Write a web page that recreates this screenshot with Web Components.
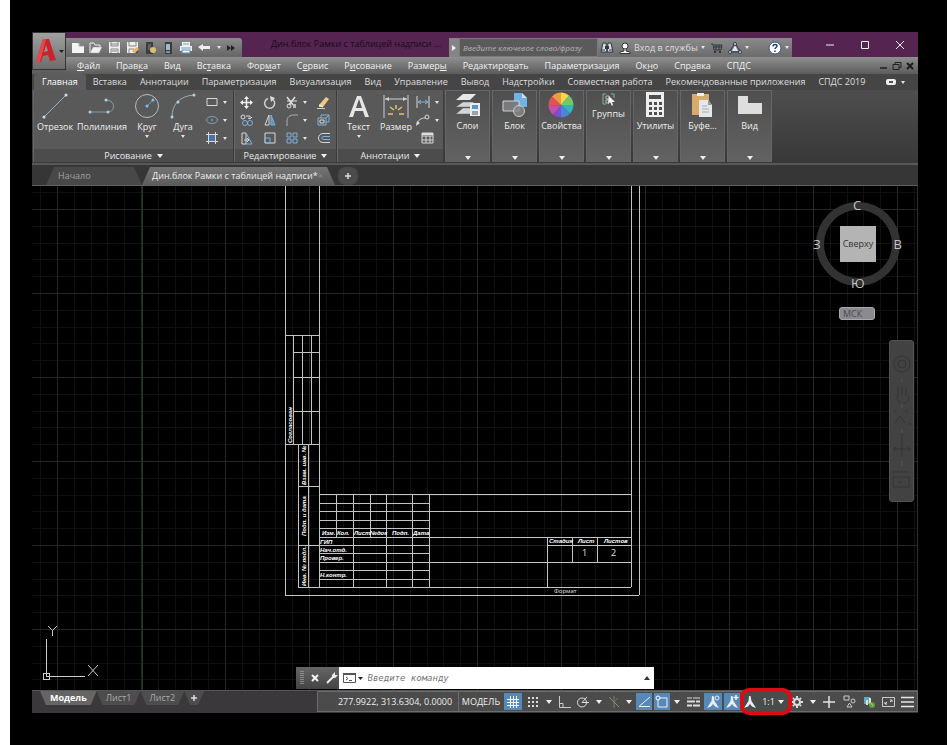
<!DOCTYPE html>
<html lang="ru">
<head>
<meta charset="utf-8">
<title>Дин.блок Рамки с таблицей надписи</title>
<style>
body{margin:0;background:#fff;font:9px/12px "Open Sans","Noto Sans",sans-serif;color:#dedede}
</style>
</head>
<body>
<cad-desktop></cad-desktop>
<script>
const RESET = `*{box-sizing:border-box}button,a,input{font:inherit;color:inherit;border:0;padding:0;margin:0;background:none;text-decoration:none}button{display:flex;align-items:center;justify-content:center;white-space:nowrap}input:focus{outline:0}`;
function define(name, css, html){
  customElements.define(name, class extends HTMLElement{
    constructor(){
      super();
      const root = this.attachShadow({mode:'open'});
      const t = document.createElement('template');
      t.innerHTML = `<style>${RESET}${css}</style>${html}`;
      root.append(t.content.cloneNode(true));
    }
  });
}

const A = 'fill="none" stroke="#d8d8d8" stroke-width="1"';
const B = 'fill="none" stroke="#7fb2dc" stroke-width="1"';
const ANNO = '<path d="M6 1h1.500l1 5 4.500 7-4-1.500L7 9l-2 2.500L1 13l4.500-7z" fill="#e8eef2"/>';
const ICONS = {
  logo:[22,26,'<path d="M1 24 8 1h6l7 21-6 1-2-6-5 1-2 6z" fill="#c8242b"/><path d="m11 7-2 7 4-1z" fill="#8f9193"/><path d="M8 1h3L5 24l-4 0z" fill="#e5484b"/>'],
  arrow:[6,4,'<path d="M0 0h6L3 4z" fill="#eee"/>'],
  arrowS:[4,3,'<path d="M0 0h4L2 3z" fill="#e4e4e4"/>'],
  arrowD:[5,3,'<path d="M0 0h5L2.500 3z" fill="#222"/>'],
  arrowU:[6,4,'<path d="M0 4h6L3 0z" fill="#333"/>'],
  right:[6,6,'<path d="m1 0 4 3-4 3z" fill="#eee"/>'],
  neu:[14,12,'<path d="M1 1h7l1 3h4v7H1z" fill="#f4f4f4"/><path d="M8 1v3h4" stroke="#999" fill="none"/>'],
  open:[14,12,'<path d="M1 11V1h4l1 2h5v2" fill="none" stroke="#eee"/><path d="M1 11 4 5h9l-3 6z" fill="#f2f2f2" stroke="#999" stroke-width=".5"/>'],
  save:[13,13,'<path d="M1 1h11v11H1z" fill="#eee"/><path d="M3 1v4h7V1M3 12V8h7v4M3 3h7M4 10h5" fill="none" stroke="#868686"/>'],
  saveas:[13,13,'<path d="M1 1h11v11H1z" fill="#eee"/><path d="M3 1v4h7V1M3 12V8h5" fill="none" stroke="#868686"/><path d="m6 10 5-4 2 2-5 4z" fill="#e3b45d"/><path d="m9 12 3-3v3z" fill="#444"/>'],
  pub:[13,14,'<path d="M2 1h7v12H2z" fill="#3c3c3c"/><path d="M4 3h3v6H4z" fill="#5e6162"/><circle cx="9" cy="9" r="3" fill="#d8bf73"/>'],
  phone:[10,14,'<path d="M2 1h7v12H2z" fill="#383c42"/><path d="M3 3h4v6H3z" fill="#9fb9cf"/><path d="M3 11h4" stroke="#ddd"/>'],
  print:[14,13,'<path d="M3 1h8v4H3zM1 5h12v5H1z" fill="#f0f0f0"/><path d="M3 9h8v3H3z" fill="#fff" stroke="#568cc0"/><path d="M2 7h10M4 3h6" stroke="#6f9fc5"/>'],
  undo:[14,8,'<path d="m1 3 5-3v2h7v3H6v2z" fill="#eee"/>'],
  more:[8,6,'<path d="m0 0 4 3-4 3zM4 0l4 3-4 3z" fill="#222"/>'],
  bino:[14,13,'<path d="M1 11 3 2h3l1 9zM7 11l1-9h3l2 9z" fill="#d9dde4" stroke="#303641"/><path d="M5 5h4v3H5z" fill="#303641"/><path d="M2 9h3M9 9h3" stroke="#303641"/>'],
  user:[12,12,'<circle cx="6" cy="4" r="3" fill="#fff" stroke="#333"/><path d="M5 7v2l-4 1v1.500h10V10l-4-1V7" fill="#fff" stroke="#333"/>'],
  cart:[13,12,'<path d="M1 2h2l1 6h7l1-5H4M4 5h8M6 3v5M9 3v5" fill="none" stroke="#303641"/><circle cx="5" cy="10" r="1" fill="#222"/><circle cx="10" cy="10" r="1" fill="#222"/>'],
  share:[14,12,'<path d="M7 1 2 9M7 1l5 8M3 10h8" fill="none" stroke="#2d3550"/><path d="m7 3-3 6h6z" fill="#dfe5ed"/><g fill="#dfe5ed" stroke="#2d3550"><circle cx="7" cy="2" r="1.500"/><circle cx="2" cy="10" r="1.500"/><circle cx="12" cy="10" r="1.500"/></g>'],
  help:[14,14,'<circle cx="7" cy="7" r="6" fill="#fff" stroke="#35558c"/><path d="M5 5.500c0-3 4-2.500 4-.500 0 1.500-2 1.500-2 3M7 9.500V11" fill="none" stroke="#263f72" stroke-width="1.500"/>'],
  min:[8,8,'<path d="M0 4h8" stroke="#eee"/>'],
  max:[8,8,'<path d="M.5.500h7v7h-7z" fill="none" stroke="#eee"/>'],
  close:[8,8,'<path d="m0 0 8 8M8 0 0 8" stroke="#eee"/>'],
  closeB:[8,8,'<path d="m1 1 6 6M7 1 1 7" stroke="#f4f4f4" stroke-width="2"/>'],
  minD:[9,8,'<path d="M1 6h7" stroke="#222" stroke-width="1.500"/>'],
  restD:[10,8,'<path d="M3 2V.500h6v5H7M1 2.500h6v5H1z" fill="none" stroke="#222"/>'],
  closeD:[8,8,'<path d="m1 1 6 6M7 1 1 7" stroke="#1c1c1c" stroke-width="2"/>'],
  cam:[10,6,'<rect width="10" height="6" rx="2" fill="#eee"/><path d="M3 3h4" stroke="#555" stroke-width="2"/>'],
  line:[26,26,'<path d="M2 24 24 2" stroke="#8fb5cc" fill="none"/><circle cx="2" cy="24" r="1.500" fill="#cfe0ea"/><circle cx="24" cy="2" r="1.500" fill="#cfe0ea"/>'],
  poly:[28,26,'<path d="M2 19h18c7 0 8-11-1-12" stroke="#8a9ca8" fill="none"/><g fill="#a9cfe8"><circle cx="2" cy="19" r="1.500"/><circle cx="20" cy="19" r="1.500"/><circle cx="18" cy="7" r="1.500"/></g>'],
  circle:[26,26,'<circle cx="13" cy="13" r="11.500" stroke="#b4bcc0" fill="none"/><path d="m13 13 6-6" stroke="#56a4cf"/><circle cx="13" cy="13" r="1.500" fill="#7fc1e8"/><circle cx="19" cy="7" r="1.500" fill="#7fc1e8"/>'],
  arc:[26,26,'<path d="M2 24C2 12 9 3 24 2" stroke="#9caab2" fill="none"/><g fill="#a9d3ec"><circle cx="2" cy="24" r="1.500"/><circle cx="8" cy="9" r="1.500"/><circle cx="24" cy="2" r="1.500"/></g>'],
  rect:[12,10,`<path d="M1 1.500h10v7H1z" ${A}/>`],
  ell:[12,10,'<ellipse cx="6" cy="5" rx="5.500" ry="3.500" fill="none" stroke="#86a0b4"/><path d="M5 5h2" stroke="#9cd0f4"/>'],
  hatch:[12,12,`<path d="M2.500 0v12M9.500 0v12M0 2.500h12M0 9.500h12" ${A}/><path d="M3 3h6v6H3z" fill="#4773ac"/>`],
  move:[13,13,'<path d="M6.500 1v11M1 6.500h11" stroke="#eee" stroke-width="1.500"/><path d="m6.500 0 2.500 3H4zM6.500 13 4 10h5zM0 6.500 3 4v5zM13 6.500 10 4v5z" fill="#eee"/>'],
  rot:[13,13,'<path d="M5 2.500a5 5 0 1 0 5 1" stroke="#ccc" fill="none" stroke-width="1.500"/><path d="m7 0 5 2-4 4z" fill="#ddd"/>'],
  trim:[12,13,'<path d="m1 1 6 8M9 1 3 9" stroke="#ddd" stroke-width="1.500"/><circle cx="3" cy="10" r="2" fill="none" stroke="#ddd"/><path d="M1 5h10" stroke="#ddd"/><path d="M7 8h3v4H7z" fill="#bbb"/>'],
  erase:[13,13,'<path d="m2 9 7-8 3 2-6 8-4 0z" fill="#efc887"/><path d="m2 9 4 2" stroke="#fff"/><path d="M0 12.500h8" stroke="#ccc"/>'],
  copy:[13,13,`<g ${A}><circle cx="3" cy="3" r="2"/><path d="M6 2h4v3M8 4l2 1 2-2"/></g><g ${B} stroke-width="1.500"><circle cx="5" cy="9" r="2.500"/><circle cx="10" cy="9" r="2.500"/></g>`],
  mirror:[12,12,`<path d="M5 1v10H1z" ${A}/><path d="M7 1v10h4z" fill="#5f93c0" stroke="#7fb2dc"/>`],
  fillet:[12,12,'<path d="M1 12V7c0-4 3-6 7-6h4" fill="none" stroke="#a9b2b8"/>'],
  box:[13,12,`<path d="M1 4h8v7H1zM4 4V1h8v7H9M9 4l3-3" ${B}/><path d="M3 6h4v3H3z" ${A}/>`],
  stretch:[12,13,`<path d="M1 1h4v11H1z" ${A}/><path d="m5 1 6 11H5" ${B}/><path d="M3 8h5M6 6l2 2-2 2" ${A}/>`],
  scale:[12,12,`<path d="M1 1h10v10H1z" ${A}/><path d="M1 6h5v5H1z" ${B}/>`],
  array:[12,12,`<path d="M1 1h4v4H1zM7 1h4v4H7zM1 7h4v4H1zM7 7h4v4H7z" ${B}/>`],
  offset:[13,12,`<path d="M13 1.500H6c-6 0-6 9 0 9h7" ${A}/><path d="M13 4.500H7c-3 0-3 3 0 3h6" ${B}/>`],
  textA:[22,26,'<path d="M1 24 9 3h4l8 21h-4l-2-6H7l-2 6zM8 15h6l-3-9z" fill="#e6e6e6"/>'],
  dim:[26,26,'<path d="M1 2v23M25 2v23M2 6h22" stroke="#ccd0d2" fill="none"/><path d="m2 6 4-2v4zM24 6l-4-2v4z" fill="#ccc"/><path d="m7 14 4 3M13 12v4M19 14l-4 3M5 21h5M16 21h5" stroke="#e5c574" stroke-width="1.500"/>'],
  lin:[14,12,`<path d="M1 0v12M13 0v12" ${A}/><path d="M2 6h10M2 6l3-2M2 6l3 2M12 6 9 4M12 6 9 8" ${B}/>`],
  leader:[14,12,`<path d="M1 10c1-4 4-6 8-6" ${A}/><circle cx="11" cy="3" r="2" ${A}/><path d="m0 12 1-5 3 2z" fill="#ddd"/>`],
  table:[13,12,`<path d="M1 1h11v10H1zM1 4h11M1 8h11M5 4v7M9 4v7" ${A}/><path d="M1 2h11" stroke="#ddd" stroke-width="2"/>`],
  layers:[26,26,'<path d="M1 22 8 16h11l-4 6zM1 15 8 10h11l-4 5z" fill="#d5d5d5" stroke="#666" stroke-width=".5"/><path d="M1 8 8 2h13l-6 6z" fill="#e8e8e8"/><path d="M15 11h10v13H15z" fill="#e9edf0"/><path d="M17 13h6v4h-6z" fill="#5e94c6"/><path d="M17 20h6M17 22h6" stroke="#555"/>'],
  block:[26,26,'<path d="M12 1h8l5 5v9H12z" fill="#6fb2e6"/><path d="M20 1v5h5z" fill="#c9e3f6"/><path d="M1 9h16v10H1z" fill="#777b7f" stroke="#d2d2d2"/><circle cx="17" cy="19" r="5.500" fill="#888c" stroke="#ccc"/>'],
  wheel:[26,26,'<path d="M13 13V.5A12.500 12.500 0 0 1 21 3.500z" fill="#f9d84a"/><path d="m13 13 8-9.500A12.500 12.500 0 0 1 25.500 13z" fill="#72c76b"/><path d="M13 13h12.500A12.500 12.500 0 0 1 22 21.500z" fill="#35b4b9"/><path d="m13 13 9 8.500a12.500 12.500 0 0 1-9 4z" fill="#4b86d6"/><path d="M13 13v12.500a12.500 12.500 0 0 1-8-3z" fill="#7d4fd0"/><path d="m13 13-8 9.500A12.500 12.500 0 0 1 .5 14z" fill="#c64fae"/><path d="M13 13 .5 14A12.500 12.500 0 0 1 4 4.500z" fill="#e2505a"/><path d="M13 13 4 4.500a12.500 12.500 0 0 1 9-4z" fill="#f29a43"/>'],
  group:[14,14,'<path d="M4 2H1v10h3M9 2h3v4" fill="none" stroke="#6fc095"/><path d="M4 4h3v3H4zM4 8h3v3H4z" fill="none" stroke="#bbb"/><path d="m7 4 6 6-3 0 1 3-1 1-2-4-2 2z" fill="#f2f2f2"/>'],
  calc:[20,26,'<path d="M1 0h18v25H1z" fill="#eee"/><path d="M4 3h12v4H4z" fill="#4e4e4e"/><g fill="#4e4e4e"><path d="M4 10h3v3H4zM9 10h3v3H9zM14 10h3v3h-3zM4 15h3v3H4zM9 15h3v3H9zM14 15h3v3h-3zM4 20h3v3H4zM9 20h3v3H9zM14 20h3v3h-3z"/></g>'],
  clip:[24,26,'<path d="M2 2h17v21H2z" fill="#d8ac68"/><path d="M7 4V1h7v3z" fill="#eee"/><path d="M9 8h9l4 5v12H9z" fill="#e4e8ea"/><path d="M18 8v5h4z" fill="#999"/><path d="M12 14h5M12 17h7M12 20h7" stroke="#aaa"/>'],
  view:[26,26,'<path d="M1 4h10v7h14v11H1z" fill="#dedede"/>'],
  grip:[4,14,'<path d="M1 0v14M3 0v14" stroke="#bbb" stroke-dasharray="1 1"/>'],
  wrench:[12,12,'<path d="m1 11 6-6" stroke="#eee" stroke-width="2"/><path d="M6 6V3l3-3v3h3L9 6z" fill="#eee"/>'],
  prompt:[13,10,'<path d="M.5.500h12v9H.500z" fill="none" stroke="#555"/><path d="M0 1h13" stroke="#555" stroke-width="2"/><path d="m3 4 2 1.500L3 7M6 7.500h3" fill="none" stroke="#555"/>'],
  grid:[12,12,'<path d="M3.500 0v12M6.500 0v12M9.500 0v12M0 3.500h12M0 6.500h12M0 9.500h12" stroke="#f2f6fa" fill="none"/>'],
  dots:[12,12,'<path d="M1 2h11M1 6h11M1 10h11" stroke="#ddd" stroke-width="2" stroke-dasharray="2 2"/>'],
  ortho:[13,12,'<path d="M1.500 0v11.500H13M1 7.500h4V11" fill="none" stroke="#ccc"/>'],
  polar:[14,12,'<circle cx="6" cy="6.500" r="4.500" fill="none" stroke="#ddd"/><path d="M6 6.500h7M6 6.500 11 1" stroke="#ddd"/>'],
  iso:[12,14,'<path d="M6 1v12" stroke="#6e8a5f"/><path d="m1 2 10 10" stroke="#8a8f85"/><path d="m6 7 4-4" stroke="#7a6a62"/>'],
  angle:[14,12,'<path d="M13 1 2 10.500h11" stroke="#eaf2f8" fill="none"/>'],
  snap:[14,13,'<path d="M4 3h8v9H3V5" stroke="#eaf2f8" fill="none"/><circle cx="3" cy="3" r="2" fill="#5789b8" stroke="#fff"/>'],
  weight:[13,12,'<path d="M0 2h5M6 2h7" stroke="#ddd"/><path d="M0 5.500h8M9 5.500h4" stroke="#ddd" stroke-width="2"/><path d="M0 9.500h5M6 9.500h7" stroke="#ddd" stroke-width="2"/>'],
  annoV:[14,14,ANNO+'<circle cx="11" cy="3" r="2" fill="none" stroke="#eee"/>'],
  annoA:[14,14,ANNO+'<path d="M11 0v5M8.500 2.500h5" stroke="#eee" stroke-width="1.500"/>'],
  anno:[14,14,ANNO],
  gear:[12,12,'<circle cx="6" cy="6" r="3" fill="none" stroke="#ddd" stroke-width="2"/><path d="M6 0v2M6 10v2M0 6h2M10 6h2M2 2l1 1M9 9l1 1M10 2 9 3M3 9l-1 1" stroke="#ddd" stroke-width="2"/>'],
  plus:[12,12,'<path d="M6 0v12M0 6h12" stroke="#e4e4e4" stroke-width="1.500"/>'],
  plusS:[8,8,'<path d="M4 1v6M1 4h6" stroke="#ddd" stroke-width="1.500"/>'],
  shapes:[13,13,'<path d="M1 1h5v4H1zM4 12l2.500-4L9 12z" fill="none" stroke="#ccc"/><circle cx="10" cy="6" r="2" fill="none" stroke="#ccc"/>'],
  graph:[12,12,'<path d="M1 1h6v7H1z" fill="#62a6cc"/><path d="M3 4h2v5H3zM6 2h2v7H6z" fill="#dfe6c0"/><circle cx="9" cy="9" r="3" fill="#57a04d"/><path d="m7 6 3 4" stroke="#e2c84e"/>'],
  full:[13,10,'<path d="M.5.500h12v9H.500z" fill="none" stroke="#ccc"/><path d="m3 7 2-2M3 5v2h2M10 3 8 5M8 3h2v2" fill="none" stroke="#ddd"/>'],
  burger:[13,12,'<path d="M0 1.500h13M0 6h13M0 10.500h13" stroke="#e8e8e8" stroke-width="1.500"/>']
};
customElements.define('cad-icon', class extends HTMLElement{
  constructor(){ super(); this.attachShadow({mode:'open'}); }
  connectedCallback(){
    const [w,h,body] = ICONS[this.getAttribute('name')];
    this.shadowRoot.innerHTML = `<style>:host{display:inline-flex;flex:none}svg{display:block}</style><svg width="${w}" height="${h}" viewBox="0 0 ${w} ${h}" aria-hidden="true">${body}</svg>`;
  }
});
const I = n => `<cad-icon name="${n}"></cad-icon>`;

define('quick-bar', `
:host{display:flex;align-items:center;gap:4px;width:176px;padding:0 5px;background:linear-gradient(#8b8b8b,#656565);border-radius:0 3px 0 0}
button{min-width:14px}.t{min-width:8px}`,
 ['neu','open','save','saveas','pub','phone','print','undo'].map(n=>`<button aria-label="${n}">${I(n)}</button>`).join('')+`<button class="t" aria-label="Список">${I('arrowS')}</button><button class="t" aria-label="Ещё">${I('more')}</button>`);

define('help-search', `
:host{display:flex}
button{width:10px;background:#858585}
input{width:139px;padding:0 3px;background:#5a5a5a;border:1px solid #7a7a7a;font-size:8px;font-style:italic}
input::placeholder{color:#b5b5b5;opacity:1}`,
 `<button aria-label="Развернуть">${I('right')}</button><input aria-label="Поиск" placeholder="Введите ключевое слово/фразу">`);

define('account-bar', `
:host{display:flex;align-items:center;gap:5px;width:194px;padding:0 3px 0 2px;background:linear-gradient(#8a8a8a,#6b6b6b)}
button{gap:3px}.g{flex:1}`,
 `<button aria-label="Найти">${I('bino')}</button><button>${I('user')}Вход в службы${I('arrowS')}</button><button aria-label="Магазин">${I('cart')}</button><button aria-label="Приложения">${I('share')}${I('arrowS')}</button><span class="g"></span><button aria-label="Справка">${I('help')}${I('arrowS')}</button>`);

define('title-bar', `
:host{display:flex;height:25px;padding-top:6px;background:#552450}
h1{flex:1;margin:0;padding-right:8px;font:inherit;text-align:right;white-space:nowrap;color:#1b0a1e}
.c{display:flex;width:126px;justify-content:space-between;padding:0 14px 0 34px;margin-top:-6px}`,
 `<quick-bar></quick-bar><h1>Дин.блок Рамки с таблицей надписи ...</h1><help-search></help-search><account-bar></account-bar><div class="c"><button aria-label="Свернуть">${I('min')}</button><button aria-label="Развернуть">${I('max')}</button><button aria-label="Закрыть">${I('close')}</button></div>`);

define('menu-bar', `
:host{display:flex;align-items:center;height:17px;padding:0 4px 0 11px;background:linear-gradient(#8f8f8f,#5c5c5c);color:#f0f0f0}
nav{display:flex;gap:16px;flex:1;white-space:nowrap}.w{display:flex;gap:4px}`,
 `<nav>${['<u>Ф</u>айл','Прав<u>к</u>а','Ви<u>д</u>','Вс<u>т</u>авка','Фор<u>м</u>ат','С<u>е</u>рвис','Р<u>и</u>сование','Размер<u>ы</u>','Редактиро<u>в</u>ать','Параметриза<u>ц</u>ия','Ок<u>н</u>о','Спр<u>а</u>вка','СПДС'].map(t=>`<a href="#">${t}</a>`).join('')}</nav><div class="w"><button aria-label="Свернуть окно">${I('minD')}</button><button aria-label="Восстановить окно">${I('restD')}</button><button aria-label="Закрыть окно">${I('closeD')}</button></div>`);

define('app-button', `
:host{display:flex}
button{width:100%;gap:2px;background:linear-gradient(#a0a0a0,#6c6c6c);border:1px solid #333}`,
 `<button aria-label="Меню приложения">${I('logo')}${I('arrowD')}</button>`);

define('window-head', `
:host{display:grid;grid-template-columns:34px 1fr;grid-template-rows:25px 17px;background:linear-gradient(#8f8f8f,#5c5c5c)}
app-button{grid-row:1/3;margin-bottom:4px}`,
 `<app-button></app-button><title-bar></title-bar><menu-bar></menu-bar>`);

define('ribbon-tabs', `
:host{display:flex;align-items:center;height:16px;padding:0 13px 0 2px;background:#454545;white-space:nowrap}
nav{display:flex;gap:13px;flex:1;line-height:16px}
.on{background:#5c5c5c;padding:0 8px;margin-right:-6px;border-radius:2px 2px 0 0;color:#fff}button{gap:5px}`,
 `<nav>${['Главная','Вставка','Аннотации','Параметризация','Визуализация','Вид','Управление','Вывод','Надстройки','Совместная работа','Рекомендованные приложения','СПДС 2019'].map((t,i)=>`<a href="#"${i?'':' class="on"'}>${t}</a>`).join('')}</nav><button aria-label="Вид ленты">${I('cam')}${I('arrowS')}</button>`);

customElements.define('tool-button', class extends HTMLElement{
  constructor(){ super(); this.attachShadow({mode:'open'}); }
  connectedCallback(){
    const dd = this.hasAttribute('menu');
    this.shadowRoot.innerHTML = `<style>${RESET}:host{display:block}
button{flex-direction:column;width:100%;justify-content:flex-start;gap:1px}
:host([small]) button{flex-direction:row;height:18px;gap:5px;justify-content:center}
span{color:#eee;line-height:14px}:host([small]) span{display:none}</style>
<button aria-label="${this.getAttribute('icon')}">${I(this.getAttribute('icon'))}<span><slot></slot></span>${dd?I('arrowS'):''}</button>`;
  }
});

define('ribbon-group', `
:host{display:flex;flex-direction:column;background:#595959;border-right:1px solid #3d3d3d;border-left:1px solid #666}
.b{flex:1;display:grid;grid-template-columns:var(--cols);padding-top:3px}
.t{height:13px;gap:5px;background:#4c4c4c;color:#e8e8e8}`,
 `<div class="b"><slot></slot></div><button class="t"><slot name="title"></slot>${I('arrow')}</button>`);

define('ribbon-drop', `
:host{display:flex;flex-direction:column;align-items:center;justify-content:space-between;width:45px;padding:1px 0 0;background:linear-gradient(#4f4f4f,#626262);border:1px solid #666;border-bottom:0}
button{height:8px}`,
 `<slot></slot><button aria-label="Развернуть панель">${I('arrow')}</button>`);

const tb = (i,t='',m='') => `<tool-button icon="${i}" ${m}>${t}</tool-button>`;
const sm = (i,m='') => `<tool-button small icon="${i}" ${m}></tool-button>`;
define('ribbon-bar', `
:host{display:flex;height:75px;padding:0 1px 1px;background:linear-gradient(#4e4e4e,#383838);border-bottom:2px solid #585858}
.d{--cols:42px 52px 38px 34px 33px;width:201px}.e{--cols:23px 23px 30px 25px;width:103px}.a{--cols:41px 34px 29px;width:107px}
.s{display:grid;grid-template-rows:18px 18px 18px;align-content:start}
.m{display:flex;gap:2px;padding-left:1px}`,
 `<ribbon-group class="d"><span slot="title">Рисование</span>${tb('line','Отрезок')}${tb('poly','Полилиния')}${tb('circle','Круг','menu')}${tb('arc','Дуга','menu')}<div class="s">${sm('rect','menu')}${sm('ell','menu')}${sm('hatch','menu')}</div></ribbon-group>
<ribbon-group class="e"><span slot="title">Редактирование</span>${[['move','copy','stretch'],['rot','mirror','scale'],['trim','fillet','array'],['erase','box','offset']].map((c,i)=>`<div class="s">${c.map(n=>sm(n,i==2?'menu':'')).join('')}</div>`).join('')}</ribbon-group>
<ribbon-group class="a"><span slot="title">Аннотации</span>${tb('textA','Текст','menu')}${tb('dim','Размер')}<div class="s">${sm('lin','menu')}${sm('leader','menu')}${sm('table')}</div></ribbon-group>
<div class="m">${[['layers','Слои'],['block','Блок'],['wheel','Свойства'],['group','Группы'],['calc','Утилиты'],['clip','Буфе...'],['view','Вид']].map(x=>`<ribbon-drop>${tb(x[0],x[1])}</ribbon-drop>`).join('')}</div>`);

define('doc-tabs', `
:host{display:flex;align-items:flex-end;height:21px;padding-left:14px;background:#363636;border-bottom:1px solid #606060}
a,button{height:18px;line-height:18px}
a{display:flex;align-items:center;white-space:nowrap;background:#484848;border-radius:6px 6px 0 0;clip-path:polygon(8px 0,calc(100% - 8px) 0,100% 100%,0 100%)}
.s{width:96px;padding-left:12px;color:#a0a0a0}
.f{width:193px;padding:0 12px 0 10px;justify-content:space-between;background:linear-gradient(#747474,#5b5b5b);color:#eee}
i{font-style:normal;color:#8d8d8d}
button{width:20px;margin-left:3px;background:#4b4b4b;border-radius:8px}`,
 `<a href="#" class="s">Начало</a><a href="#" class="f">Дин.блок Рамки с таблицей надписи*<i>×</i></a><button aria-label="Новая вкладка">${I('plusS')}</button>`);

const H = [[285,595,639],[319,587,631],[285,335,319],[293,352,319],[293,377,319],[293,411,319],[285,444,319],[298,486,319],[298,545,319],[298,587,319],[319,494,631],[319,511,631],[319,537,631],[319,562,631],[547,545,631],...[503,520,528,545,553,570,579].map(y=>[319,y,429])];
const V = [[285,180,595],[639,180,595],[319,180,587],[631,180,587],[293,335,444],[302,335,444],[311,335,444],[298,444,587],[308,444,587],[336,494,537],[353,494,587],[370,494,537],[386,494,587],[412,494,587],[429,494,587],[547,537,587],[572,537,562],[597,537,562]];
define('drawing-sheet', `
:host{position:absolute;inset:0}svg{display:block;width:100%;height:100%}
.n{fill:#fff;font:italic bold 6px "Liberation Sans",sans-serif}`,
 `<svg aria-label="Чертёж"><defs><pattern id="g" x="25" y="23" width="84" height="84" patternUnits="userSpaceOnUse"><g shape-rendering="crispEdges" fill="none"><path d="M17.500 0v84M34.500 0v84M50.500 0v84M67.500 0v84M0 17.500h84M0 34.500h84M0 50.500h84M0 67.500h84" stroke="#0e1012"/><path d="M.5 0v84M0 .5h84" stroke="#25282b"/></g></pattern></defs>
<rect width="100%" height="100%" fill="#000"/><rect width="100%" height="100%" fill="url(#g)"/>
<g transform="translate(-32 -186)"><path d="M142 186v504" stroke="#1c3c22" stroke-width="1" shape-rendering="crispEdges"/>
<path shape-rendering="crispEdges" fill="none" stroke="#c4c4c4" d="${H.map(h=>`M${h[0]} ${h[1]}.5H${h[2]}`).join('')}${V.map(v=>`M${v[0]}.5 ${v[1]}V${v[2]}`).join('')}"/>
<g class="n"><text x="322" y="535">Изм.</text><text x="337" y="535">Кол.</text><text x="354" y="535">Лист</text><text x="370" y="535">№док</text><text x="392" y="535">Подп.</text><text x="413" y="535">Дата</text>
<text x="320" y="544">ГИП</text><text x="320" y="552">Нач.отд.</text><text x="320" y="560">Провер.</text><text x="320" y="577">Н.контр.</text>
<text x="549" y="543">Стадия</text><text x="578" y="543">Лист</text><text x="604" y="543">Листов</text>
<text transform="translate(292 443) rotate(-90)">Согласован</text><text transform="translate(306 485) rotate(-90)">Взам. инв. №</text><text transform="translate(306 536) rotate(-90)">Подп. и дата</text><text transform="translate(306 586) rotate(-90)">Инв. № подл.</text></g>
<g fill="#e0e0e0" font-size="9"><text x="582" y="556">1</text><text x="611" y="556">2</text><text x="554" y="593" font-size="6">Формат</text></g>
<g fill="none" stroke="#ccc" shape-rendering="crispEdges"><path d="M46.500 639v37.500H85M43.500 673.500h6v6h-6z"/></g>
<path d="m48 626 4.500 4.500V636M57 626l-4.500 4.500M88 665l10 11M98 665 88 676" fill="none" stroke="#ccc"/></g></svg>`);

define('view-cube', `
:host{position:absolute;right:17px;top:16px;width:84px;height:84px;border:8px solid #323232;border-radius:50%;color:#c4c4c4;font-size:13px;line-height:16px}
button,span{position:absolute}
button{inset:16px;background:#b4b4b4;color:#333;font-size:9px}
.n{left:29px;top:-13px}.s{left:27px;bottom:-13px}.w{left:-11px;top:26px}.e{right:-10px;top:26px}`,
 `<span class="n">С</span><span class="w">З</span><button>Сверху</button><span class="e">В</span><span class="s">Ю</span>`);

define('ucs-button', `:host{position:absolute;right:42px;top:121px}button{width:36px;height:13px;justify-content:flex-start;padding-left:3px;border:1px solid #aaa;border-radius:3px;background:#8b8b8f;color:#4a4a4c}`,`<button>МСК</button>`);

define('nav-bar', `:host{position:absolute;right:3px;top:154px;width:25px;height:162px;border:1px solid #525252;border-radius:3px;background:#424242}svg{display:block}`,
 `<svg width="23" height="160" fill="none" stroke="#343434"><circle cx="12" cy="23" r="8"/><circle cx="12" cy="23" r="4"/><path d="M8 55V46M12 54v-9M16 55V46M7 55c0 10 12 10 12 0M4 70h3M15 70h3M5 82l5-7 5 7M18 83h3M12 92v24M4 108h16M6 106l-3 2 3 2M18 106l3 2-3 2M3 131h16M3 136h16v10H3zM8 141h4"/><path d="M12 38v3M12 62v5M12 88v4M12 120v5" stroke="#555"/></svg>`);

define('command-line', `
:host{position:absolute;left:0;right:0;bottom:1px;margin:0 auto;width:358px;height:22px;display:flex;background:#fff}
.h{display:flex;align-items:center;gap:7px;width:43px;padding-left:4px;background:linear-gradient(#666,#444)}
.p{padding:0 5px 0 4px;gap:2px}
input{flex:1;min-width:0;font:italic 9px "DejaVu Sans Mono","Liberation Mono",monospace;color:#777}
input::placeholder{color:#777;opacity:1}.u{width:14px}`,
 `<div class="h">${I('grip')}<button aria-label="Закрыть">${I('closeB')}</button><button aria-label="Настройка">${I('wrench')}</button></div><button class="p" aria-label="Последние команды">${I('prompt')}${I('arrowD')}</button><input aria-label="Команда" placeholder="Введите команду"><button class="u" aria-label="Журнал">${I('arrowU')}</button>`);

define('drawing-area', `:host{display:block;position:relative;flex:1;overflow:hidden;border-right:1px solid #2e2e2e}`,
 `<drawing-sheet></drawing-sheet><view-cube></view-cube><ucs-button></ucs-button><nav-bar></nav-bar><command-line></command-line>`);

define('layout-tabs', `
:host{display:flex;align-items:flex-start;flex:1;padding:0 0 0 8px;white-space:nowrap}
a,button{height:14px;line-height:13px;background:#4d4d4d;color:#aaa;padding:0 9px;clip-path:polygon(0 0,100% 0,calc(100% - 6px) 100%,6px 100%)}
.on{background:#656565;color:#fff;font-weight:bold;padding:0 10px}button{padding:0 6px}`,
 `<a class="on" href="#">Модель</a><a href="#">Лист1</a><a href="#">Лист2</a><button aria-label="Новый лист">${I('plusS')}</button>`);

const st = (i,c='') => `<button class="${c}" aria-label="${i}">${I(i)}</button>`;
const ar = `<button class="v" aria-label="Список">${I('arrow')}</button>`;
define('status-tools', `
:host{display:flex;height:21px;background:#4b4b4b;border:1px solid #6c6c6c;color:#eee}
button{width:20px}.n{width:18px}.v{width:12px}
.k{background:#5789b8;box-shadow:inset 0 0 0 1px #4b4b4b}
.c{width:141px;padding-left:14px;border-right:1px solid #6c6c6c}
.m{width:44px}
.z{position:relative;display:flex}.z::after{content:"";position:absolute;left:-1px;right:-5px;top:-4px;bottom:-4px;border:4px solid #dd0b12;border-radius:9px;pointer-events:none}
.q{width:28px;gap:3px}`,
 `<button class="c">277.9922, 313.6304, 0.0000</button><button class="m">МОДЕЛЬ</button>${st('grid','k')}${st('dots')}${ar}${st('ortho','n')}${st('polar')}${ar}${st('iso','n')}${ar}${st('angle','n k')}${st('snap','n k')}${ar}${st('weight')}${st('annoV','k')}${st('annoA','n k')}<div class="z">${st('anno','n')}<button class="q">1:1${I('arrow')}</button></div>${st('gear')}${ar}${st('plus')}${st('shapes')}${st('graph')}${st('full','n')}${st('burger')}`);

define('status-bar', `:host{display:flex;height:23px;background:#3a383a;border-top:1px solid #555}`,`<layout-tabs></layout-tabs><status-tools></status-tools>`);

define('cad-desktop', `
:host{display:block;min-height:100vh;margin:0 3px 0 10px;padding:32px 29px 32px 22px;background:#000;box-sizing:border-box}
main{display:flex;flex-direction:column;min-height:calc(100vh - 64px)}`,
 `<main><window-head></window-head><ribbon-tabs></ribbon-tabs><ribbon-bar></ribbon-bar><doc-tabs></doc-tabs><drawing-area></drawing-area><status-bar></status-bar></main>`);
</script>
</body>
</html>
